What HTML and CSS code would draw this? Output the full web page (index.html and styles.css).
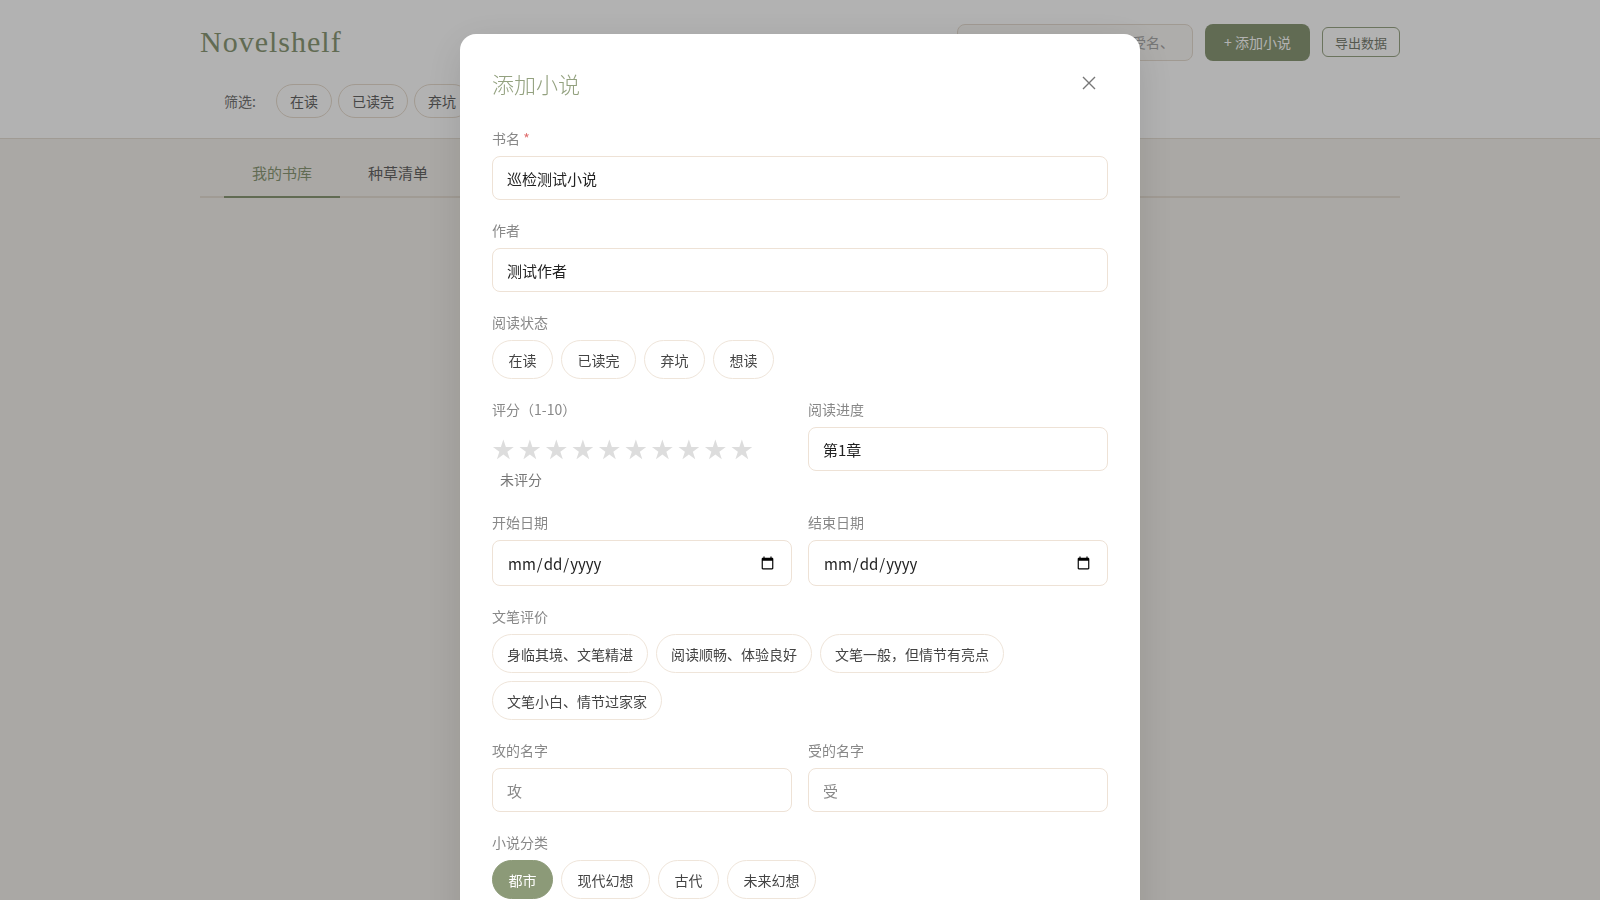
FILE: index.html
```html
<!DOCTYPE html>
<html lang="zh-CN">
<head>
    <meta charset="utf-8">
    <title>Novelshelf</title>
    <link rel="stylesheet" href="styles.css">
</head>
<body>
    <header class="topbar">
        <div class="container">
            <div class="topbar-row">
                <h1 class="logo">Novelshelf</h1>
                <div class="actions">
                    <input class="search" type="text" placeholder="搜索书名、作者、攻名、受名、标签">
                    <button class="btn btn-primary">+ 添加小说</button>
                    <button class="btn btn-outline">导出数据</button>
                </div>
            </div>
            <div class="filters">
                <span class="filters-label">筛选:</span>
                <button class="chip">在读</button>
                <button class="chip">已读完</button>
                <button class="chip">弃坑</button>
                <button class="chip">想读</button>
            </div>
        </div>
    </header>

    <main class="container">
        <nav class="tabs">
            <a class="tab active">我的书库</a>
            <a class="tab">种草清单</a>
        </nav>
        <div class="shelf"></div>
    </main>

    <!-- 添加小说弹窗 -->
    <div class="overlay">
        <div class="modal">
            <div class="modal-head">
                <h2 class="modal-title">添加小说</h2>
                <button class="close" type="button">
                    <svg width="14" height="14" viewBox="0 0 14 14">
                        <path d="M1 1 L13 13 M13 1 L1 13" stroke="currentColor" stroke-width="1.4" fill="none"/>
                    </svg>
                </button>
            </div>

            <form>
                <div class="field">
                    <label class="field-label">书名 <span class="req">*</span></label>
                    <input class="input" type="text" value="巡检测试小说">
                </div>

                <div class="field">
                    <label class="field-label">作者</label>
                    <input class="input" type="text" value="测试作者">
                </div>

                <div class="field">
                    <label class="field-label">阅读状态</label>
                    <div class="pills">
                        <button type="button" class="pill">在读</button>
                        <button type="button" class="pill">已读完</button>
                        <button type="button" class="pill">弃坑</button>
                        <button type="button" class="pill">想读</button>
                    </div>
                </div>

                <div class="row">
                    <div class="field">
                        <label class="field-label">评分（1-10）</label>
                        <div class="stars">
                            <span class="star">★</span><span class="star">★</span><span class="star">★</span><span class="star">★</span><span class="star">★</span><span class="star">★</span><span class="star">★</span><span class="star">★</span><span class="star">★</span><span class="star">★</span>
                        </div>
                        <div class="rating-text">未评分</div>
                    </div>
                    <div class="field">
                        <label class="field-label">阅读进度</label>
                        <input class="input" type="text" value="第1章">
                    </div>
                </div>

                <div class="row">
                    <div class="field">
                        <label class="field-label">开始日期</label>
                        <input class="input input-date" type="date">
                    </div>
                    <div class="field">
                        <label class="field-label">结束日期</label>
                        <input class="input input-date" type="date">
                    </div>
                </div>

                <div class="field">
                    <label class="field-label">文笔评价</label>
                    <div class="pills">
                        <button type="button" class="pill pill-sm">身临其境、文笔精湛</button>
                        <button type="button" class="pill pill-sm">阅读顺畅、体验良好</button>
                        <button type="button" class="pill pill-sm">文笔一般，但情节有亮点</button>
                        <button type="button" class="pill pill-sm">文笔小白、情节过家家</button>
                    </div>
                </div>

                <div class="row">
                    <div class="field">
                        <label class="field-label">攻的名字</label>
                        <input class="input" type="text" placeholder="攻">
                    </div>
                    <div class="field">
                        <label class="field-label">受的名字</label>
                        <input class="input" type="text" placeholder="受">
                    </div>
                </div>

                <div class="field">
                    <label class="field-label">小说分类</label>
                    <div class="pills">
                        <button type="button" class="pill on">都市</button>
                        <button type="button" class="pill">现代幻想</button>
                        <button type="button" class="pill">古代</button>
                        <button type="button" class="pill">未来幻想</button>
                    </div>
                </div>

                <div class="field">
                    <label class="field-label">标签</label>
                    <input class="input" type="text" placeholder="用逗号分隔">
                </div>

                <div class="field">
                    <label class="field-label">简评</label>
                    <textarea class="input textarea"></textarea>
                </div>

                <div class="modal-foot">
                    <button type="button" class="btn btn-outline">取消</button>
                    <button type="submit" class="btn btn-primary">保存</button>
                </div>
            </form>
        </div>
    </div>
</body>
</html>
```

FILE: styles.css
```css
* {
    box-sizing: border-box;
}
body {
    margin: 0;
    background: #f4f1ec;
    font-family: "Noto Sans CJK SC", "Noto Sans", sans-serif;
    color: #333;
}
button,
input,
textarea {
    font-family: inherit;
}
.container {
    width: 1200px;
    margin: 0 auto;
}

/* 顶部 */
.topbar {
    background: #fff;
    border-bottom: 1px solid #e6dfd5;
}
.topbar .container {
    padding: 22px 0 20px;
}
.topbar-row {
    display: flex;
    align-items: center;
    justify-content: space-between;
    height: 40px;
}
.logo {
    margin: 0;
    font-family: "Liberation Serif", serif;
    font-weight: normal;
    font-size: 30px;
    line-height: 40px;
    letter-spacing: 1px;
    color: #8c9a78;
}
.actions {
    display: flex;
    align-items: center;
    gap: 12px;
}
.search {
    width: 236px;
    height: 37px;
    padding: 0 20px;
    border: 1px solid #e6ddd2;
    border-radius: 8px;
    background: #faf8f5;
    font-size: 14px;
    color: #333;
}
.search::placeholder {
    color: #aaa;
}
.btn {
    border-radius: 8px;
    cursor: pointer;
}
.btn-primary {
    height: 37px;
    padding: 0 19px;
    border: none;
    background: #8c9a78;
    color: #fff;
    font-size: 14px;
}
.btn-outline {
    height: 30px;
    padding: 0 12px;
    border: 1px solid #9aa687;
    border-radius: 6px;
    background: #fff;
    color: #7a7f72;
    font-size: 13px;
}
.filters {
    display: flex;
    align-items: center;
    gap: 6px;
    margin-top: 22px;
    padding-left: 24px;
}
.filters-label {
    margin-right: 14px;
    font-size: 14px;
    color: #777;
}
.chip {
    height: 34px;
    padding: 0 13px;
    border: 1px solid #e8ddd0;
    border-radius: 17px;
    background: #fff;
    color: #666;
    font-size: 14px;
}

/* 标签页 */
.tabs {
    display: flex;
    margin-top: 10px;
    padding-left: 24px;
    border-bottom: 2px solid #e6ded4;
}
.tab {
    padding: 13px 28px 12px;
    margin-bottom: -2px;
    border-bottom: 2px solid transparent;
    font-size: 15px;
    line-height: 22px;
    color: #666;
    cursor: pointer;
}
.tab.active {
    color: #8c9a78;
    border-color: #8c9a78;
}

/* 弹窗 */
.overlay {
    position: fixed;
    top: 0;
    left: 0;
    right: 0;
    bottom: 0;
    background: rgba(0, 0, 0, 0.3);
    padding: 34px 0;
    overflow: hidden;
}
.modal {
    width: 680px;
    margin: 0 auto;
    padding: 30px 32px 32px;
    background: #fff;
    border-radius: 16px;
    box-shadow: 0 10px 40px rgba(0, 0, 0, 0.12);
}
.modal-head {
    display: flex;
    align-items: center;
    justify-content: space-between;
    height: 38px;
    margin-bottom: 26px;
}
.modal-title {
    margin: 0;
    font-size: 22px;
    font-weight: 300;
    color: #93a17f;
}
.close {
    width: 38px;
    height: 38px;
    padding: 0;
    border: none;
    background: none;
    color: #777;
    display: flex;
    align-items: center;
    justify-content: center;
    cursor: pointer;
}
.field {
    margin-bottom: 20px;
}
.field-label {
    display: block;
    margin-bottom: 8px;
    font-size: 14px;
    line-height: 20px;
    color: #888;
}
.req {
    color: #e07070;
}
.input {
    width: 100%;
    height: 44px;
    padding: 0 14px;
    border: 1px solid #eee2d6;
    border-radius: 8px;
    background: #fff;
    font-size: 15px;
    color: #222;
}
.input::placeholder {
    color: #888;
}
.input-date {
    height: 46px;
}
.textarea {
    height: 90px;
    padding: 10px 14px;
    resize: none;
}
.row {
    display: grid;
    grid-template-columns: 1fr 1fr;
    gap: 16px;
}
.pills {
    display: flex;
    flex-wrap: wrap;
    gap: 8px;
}
.pill {
    height: 39px;
    padding: 0 15.5px;
    border: 1px solid #efe5da;
    border-radius: 20px;
    background: #fff;
    font-size: 14px;
    color: #444;
    cursor: pointer;
}
.pill-sm {
    padding: 0 14px;
}
.pill.on {
    background: #8c9a78;
    border-color: #8c9a78;
    color: #fff;
}
.stars {
    display: flex;
    align-items: flex-start;
    height: 40px;
    padding-top: 6px;
    margin-left: -2px;
}
.star {
    width: 26.5px;
    text-align: center;
    font-family: "DejaVu Sans", sans-serif;
    font-size: 27px;
    line-height: 34px;
    color: #ddd;
    cursor: pointer;
}
.rating-text {
    margin: 2px 0 3px 8px;
    font-size: 14px;
    line-height: 20px;
    color: #777;
}
.modal-foot {
    display: flex;
    justify-content: flex-end;
    gap: 12px;
}
```
